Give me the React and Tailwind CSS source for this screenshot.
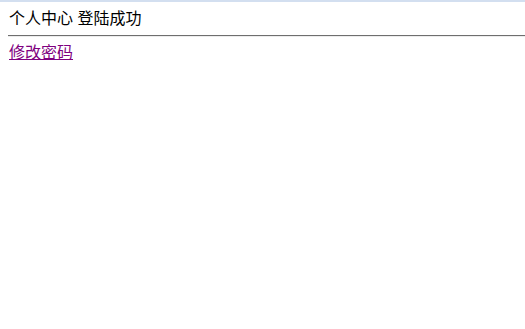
export default function App() {
  return (
    <div
      className="min-h-screen bg-white text-black"
      style={{ fontFamily: '"Liberation Sans", "Noto Sans CJK SC", sans-serif' }}
    >
      <div className="h-[2px] bg-[#d3dff0]" />
      <div className="pl-[9px] pt-[8px] text-[16px] leading-[18px]">
        个人中心 登陆成功
      </div>
      <div className="ml-[8px] mt-[7px] border-t border-t-[#6e6e6e] border-b border-b-[#ececec]" />
      <div className="pl-[9px] pt-[7px] text-[16px] leading-[18px]">
        <a href="#" className="text-[#800080] underline">
          修改密码
        </a>
      </div>
    </div>
  );
}
